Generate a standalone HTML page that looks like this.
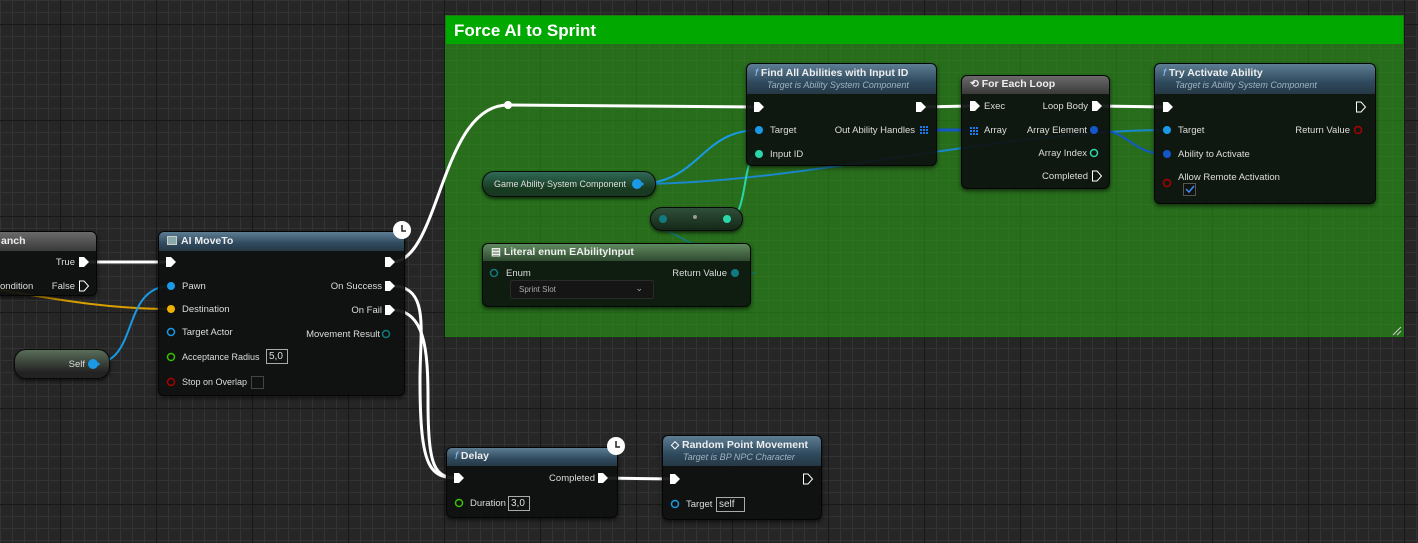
<!DOCTYPE html>
<html><head><meta charset="utf-8"><style>
*{margin:0;padding:0;box-sizing:border-box}
body{width:1418px;height:543px;overflow:hidden;position:relative;font-family:"Liberation Sans",sans-serif;font-size:10px;color:#ddd;
background-color:#262626;
background-image:
linear-gradient(90deg,#181818 1px,transparent 1px),
linear-gradient(0deg,#181818 1px,transparent 1px),
linear-gradient(90deg,#333 1px,transparent 1px),
linear-gradient(0deg,#333 1px,transparent 1px);
background-size:96px 96px,96px 96px,12px 12px,12px 12px;
background-position:60px 0,0 25px,0 0,0 1px;}
.abs{position:absolute}
.comment{position:absolute;left:445px;top:15px;width:959px;height:322px;background:rgba(40,160,20,0.58);border:1px solid #1f7a14}
.comment .h{height:28px;background:#00a800;color:#fff;font-size:17px;font-weight:bold;padding:5px 8px}
.node{position:absolute;background:rgba(14,17,15,0.93);border:1px solid #050505;border-radius:6px;box-shadow:0 2px 4px rgba(0,0,0,.6)}
.hd{border-radius:5px 5px 0 0;background:linear-gradient(180deg,#5d7d93,#2f4a5e 60%,#263845);color:#eee;font-size:10.5px;font-weight:bold;padding:3px 8px;height:19px;white-space:nowrap}
.hd.tall{height:30px}
.hd .sub{font-weight:normal;font-style:italic;color:#9fb3c0;font-size:9px;padding-left:12px;margin-top:1px}
.hd.gray{background:linear-gradient(180deg,#6a6a6a,#3a3a3a)}
.hd.greenh{background:linear-gradient(180deg,#5f8a5f,#304a30)}
.t{position:absolute;font-size:9.5px;color:#ddd;white-space:nowrap}
.r{text-align:right}
.box{position:absolute;border:1px solid #aaa;font-size:10px;color:#ddd;padding:0 2px;height:15px;line-height:13px}
.pill{position:absolute;border-radius:12px;background:linear-gradient(180deg,#3e5a3e,#1b2b1b);border:1px solid #0a0a0a;box-shadow:0 2px 3px rgba(0,0,0,.6)}
.clock{position:absolute;width:18px;height:18px;border-radius:50%;background:#fff}
.fn{font-style:italic;color:#8fc4ff;font-weight:normal;margin-right:3px}
</style></head><body>
<div class="comment"><div class="h">Force AI to Sprint</div></div>
<svg class="abs" style="left:1392px;top:326px" width="10" height="10"><path d="M1 9L9 1M5 9L9 5" stroke="#ccc" stroke-width="1"/></svg>

<svg class="abs" style="left:0;top:0" width="1418" height="543" fill="none">
<path d="M0 290 C60 300,110 309,171 309" stroke="#d9a000" stroke-width="2"/>
<path d="M93 364 C140 364,120 286,171 286" stroke="#1a9ae6" stroke-width="2"/>
<path d="M83 262 L171 262" stroke="#fff" stroke-width="3"/>
<path d="M392 262 C440 262,440 105,508 105 L759 107" stroke="#fff" stroke-width="3"/>
<circle cx="508" cy="105" r="4" fill="#fff"/>
<path d="M392 286 C430 286,420 330,420 380 C420 470,430 478,459 478" stroke="#fff" stroke-width="3"/>
<path d="M392 310 C425 310,428 350,428 400 C428 470,435 478,459 478" stroke="#fff" stroke-width="3"/>
<path d="M602 478 L675 479" stroke="#fff" stroke-width="3"/>
<path d="M921 107 L970 106" stroke="#fff" stroke-width="3"/>
<path d="M1097 106 L1167 107" stroke="#fff" stroke-width="3"/>
<path d="M637 184 C700 184,700 130,759 130" stroke="#1a9ae6" stroke-width="2"/>
<path d="M637 184 C800 184,1000 130,1167 130" stroke="#1a88cc" stroke-width="2"/>
<path d="M923 130 L970 130" stroke="#1457c8" stroke-width="3"/>
<path d="M1097 130 C1130 130,1130 154,1167 154" stroke="#1457c8" stroke-width="2"/>
<path d="M727 219 C750 219,740 154,759 154" stroke="#2bd6a8" stroke-width="2"/>
<path d="M663 219 C640 225,700 240,735 273 L755 273" stroke="#117a80" stroke-width="1.5"/>
</svg>

<div class="node" style="left:-10px;top:231px;width:107px;height:65px">
<div class="hd gray" style="padding-left:10px">anch</div></div>
<div class="t r" style="left:20px;top:257px;width:55px">True</div>
<div class="t r" style="left:20px;top:281px;width:55px">False</div>
<div class="t" style="left:0;top:281px">ondition</div>
<svg class="abs" style="left:78px;top:256px" width="12" height="36"><path d="M1 1h5l5 5-5 5H1z" fill="#fff"/><path d="M1.5 25h4.5l4.5 5-4.5 5H1.5z" stroke="#fff" fill="none"/></svg>

<div class="pill" style="left:14px;top:349px;width:96px;height:30px;background:linear-gradient(180deg,#5a6e5a,#222 80%)"></div>
<div class="t r" style="left:30px;top:359px;width:55px">Self</div>
<svg class="abs" style="left:87px;top:358px" width="14" height="12"><circle cx="6" cy="6" r="5" fill="#1a9ae6"/><path d="M11 4l2 2-2 2z" fill="#1a9ae6"/></svg>

<div class="node" style="left:158px;top:231px;width:247px;height:165px">
<div class="hd"><span style="display:inline-block;width:10px;height:9px;border:1px solid #ccc;background:#8aa;margin-right:4px;vertical-align:-1px"></span>AI MoveTo</div></div>
<div class="clock" style="left:393px;top:221px"></div>
<svg class="abs" style="left:393px;top:221px" width="18" height="18"><path d="M9 4v6h4" stroke="#222" stroke-width="1.5" fill="none"/></svg>
<svg class="abs" style="left:0;top:0" width="420" height="400">
<path d="M166 257h5l5 5-5 5h-5z" fill="#fff"/>
<path d="M385 257h5l5 5-5 5h-5z" fill="#fff"/>
<path d="M385 281h5l5 5-5 5h-5z" fill="#fff"/>
<path d="M385 305h5l5 5-5 5h-5z" fill="#fff"/>
<circle cx="171" cy="286" r="4" fill="#1a9ae6"/>
<circle cx="171" cy="309" r="4" fill="#f0b000"/>
<circle cx="171" cy="332" r="3.5" stroke="#1a9ae6" stroke-width="1.5" fill="none"/>
<circle cx="171" cy="357" r="3.5" stroke="#3ac000" stroke-width="1.5" fill="none"/>
<circle cx="171" cy="382" r="3.5" stroke="#a00" stroke-width="1.5" fill="none"/>
<circle cx="386" cy="334" r="3.5" stroke="#117a80" stroke-width="1.5" fill="none"/>
</svg>
<div class="t" style="left:182px;top:281px">Pawn</div>
<div class="t" style="left:182px;top:304px">Destination</div>
<div class="t" style="left:182px;top:327px">Target Actor</div>
<div class="t" style="left:182px;top:352px;font-size:9px">Acceptance Radius</div>
<div class="box" style="left:266px;top:349px;width:22px">5,0</div>
<div class="t" style="left:182px;top:377px;font-size:9px">Stop on Overlap</div>
<div class="box" style="left:251px;top:376px;width:13px;height:13px;border-color:#444"></div>
<div class="t r" style="left:300px;top:281px;width:82px">On Success</div>
<div class="t r" style="left:300px;top:305px;width:82px">On Fail</div>
<div class="t r" style="left:280px;top:329px;width:100px">Movement Result</div>

<div class="pill" style="left:482px;top:171px;width:174px;height:26px;background:linear-gradient(180deg,#2f6a58,#183a20 70%)"></div>
<div class="t" style="left:494px;top:179px;font-size:9px">Game Ability System Component</div>
<svg class="abs" style="left:631px;top:178px" width="14" height="12"><circle cx="6" cy="6" r="5" fill="#1a9ae6"/><path d="M11 4l2 2-2 2z" fill="#1a9ae6"/></svg>

<div class="pill" style="left:650px;top:207px;width:93px;height:24px;background:linear-gradient(180deg,#2f4f3a,#152818)"></div>
<svg class="abs" style="left:650px;top:207px" width="95" height="26"><circle cx="13" cy="12" r="4" fill="#117a80"/><circle cx="45" cy="10" r="2" fill="#999"/><circle cx="77" cy="12" r="4" fill="#2bd6a8"/></svg>

<div class="node" style="left:482px;top:243px;width:269px;height:64px;background:rgba(14,22,15,0.93)">
<div class="hd greenh" style="height:17px;padding-top:2px">&#9636; Literal enum EAbilityInput</div></div>
<div class="t" style="left:506px;top:268px">Enum</div>
<div class="t r" style="left:640px;top:268px;width:87px">Return Value</div>
<div class="abs" style="left:510px;top:280px;width:144px;height:19px;background:#151515;border:1px solid #2a2a2a;border-radius:2px;font-size:8px;color:#aaa;padding:4px 0 0 8px">Sprint Slot<span style="position:absolute;right:10px;top:2px;font-size:9px">&#8964;</span></div>
<svg class="abs" style="left:488px;top:266px" width="260" height="14"><circle cx="6" cy="7" r="3.5" stroke="#117a80" stroke-width="1.5" fill="none"/><circle cx="247" cy="7" r="4" fill="#117a80"/></svg>

<div class="node" style="left:746px;top:63px;width:191px;height:103px">
<div class="hd tall"><span class="fn">f</span>Find All Abilities with Input ID<div class="sub">Target is Ability System Component</div></div></div>
<div class="t" style="left:770px;top:125px">Target</div>
<div class="t" style="left:770px;top:149px">Input ID</div>
<div class="t r" style="left:820px;top:125px;width:95px">Out Ability Handles</div>
<svg class="abs" style="left:740px;top:95px" width="200" height="70">
<path d="M14 7h5l5 5-5 5h-5z" fill="#fff"/><path d="M176 7h5l5 5-5 5h-5z" fill="#fff"/>
<circle cx="19" cy="35" r="4" fill="#1a9ae6"/><circle cx="19" cy="59" r="4" fill="#2bd6a8"/>
<g fill="#1a7af0"><rect x="180" y="31" width="2" height="2"/><rect x="183" y="31" width="2" height="2"/><rect x="186" y="31" width="2" height="2"/><rect x="180" y="34" width="2" height="2"/><rect x="183" y="34" width="2" height="2"/><rect x="186" y="34" width="2" height="2"/><rect x="180" y="37" width="2" height="2"/><rect x="183" y="37" width="2" height="2"/><rect x="186" y="37" width="2" height="2"/></g>
</svg>

<div class="node" style="left:961px;top:75px;width:149px;height:114px">
<div class="hd gray" style="height:18px;padding-top:2px">&#10226; For Each Loop</div></div>
<div class="t" style="left:984px;top:101px">Exec</div>
<div class="t" style="left:984px;top:125px">Array</div>
<div class="t r" style="left:1000px;top:101px;width:88px">Loop Body</div>
<div class="t r" style="left:1000px;top:125px;width:87px">Array Element</div>
<div class="t r" style="left:1000px;top:148px;width:87px">Array Index</div>
<div class="t r" style="left:1000px;top:171px;width:88px">Completed</div>
<svg class="abs" style="left:960px;top:95px" width="150" height="90">
<path d="M10 6h5l5 5-5 5h-5z" fill="#fff"/><path d="M132 6h5l5 5-5 5h-5z" fill="#fff"/>
<path d="M132.5 76h4.5l4.5 5-4.5 5h-4.5z" stroke="#fff" fill="none"/>
<g fill="#1a7af0"><rect x="10" y="32" width="2" height="2"/><rect x="13" y="32" width="2" height="2"/><rect x="16" y="32" width="2" height="2"/><rect x="10" y="35" width="2" height="2"/><rect x="13" y="35" width="2" height="2"/><rect x="16" y="35" width="2" height="2"/><rect x="10" y="38" width="2" height="2"/><rect x="13" y="38" width="2" height="2"/><rect x="16" y="38" width="2" height="2"/></g>
<circle cx="134" cy="35" r="4" fill="#1457c8"/>
<circle cx="134" cy="58" r="3.5" stroke="#2bd6a8" stroke-width="1.5" fill="none"/>
</svg>

<div class="node" style="left:1154px;top:63px;width:222px;height:141px">
<div class="hd tall"><span class="fn">f</span>Try Activate Ability<div class="sub">Target is Ability System Component</div></div></div>
<div class="t" style="left:1178px;top:125px">Target</div>
<div class="t" style="left:1178px;top:149px">Ability to Activate</div>
<div class="t" style="left:1178px;top:172px">Allow Remote Activation</div>
<div class="t r" style="left:1270px;top:125px;width:80px">Return Value</div>
<svg class="abs" style="left:1154px;top:95px" width="222" height="105">
<path d="M9 7h5l5 5-5 5h-5z" fill="#fff"/><path d="M202.5 7h4.5l4.5 5-4.5 5h-4.5z" stroke="#fff" fill="none"/>
<circle cx="13" cy="35" r="4" fill="#1a9ae6"/><circle cx="13" cy="59" r="4" fill="#1457c8"/>
<circle cx="13" cy="88" r="3.5" stroke="#a00" stroke-width="1.5" fill="none"/>
<circle cx="204" cy="35" r="3.5" stroke="#a00" stroke-width="1.5" fill="none"/>
<rect x="29.5" y="88.5" width="12" height="12" fill="#111" stroke="#555"/>
<path d="M32 94l3 3 5-6" stroke="#3a8cf0" stroke-width="1.5" fill="none"/>
</svg>

<div class="node" style="left:446px;top:447px;width:172px;height:71px">
<div class="hd" style="height:18px;padding-top:2px"><span class="fn">f</span>Delay</div></div>
<div class="clock" style="left:607px;top:437px"></div>
<svg class="abs" style="left:607px;top:437px" width="18" height="18"><path d="M9 4v6h4" stroke="#222" stroke-width="1.5" fill="none"/></svg>
<div class="t r" style="left:520px;top:473px;width:75px">Completed</div>
<div class="t" style="left:470px;top:498px">Duration</div>
<div class="box" style="left:508px;top:496px;width:22px">3,0</div>
<svg class="abs" style="left:450px;top:470px" width="165" height="40">
<path d="M4 3h5l5 5-5 5H4z" fill="#fff"/><path d="M148 3h5l5 5-5 5h-5z" fill="#fff"/>
<circle cx="9" cy="33" r="3.5" stroke="#3ac000" stroke-width="1.5" fill="none"/>
</svg>

<div class="node" style="left:662px;top:435px;width:160px;height:85px">
<div class="hd tall"><span style="color:#fff">&#9671;</span> Random Point Movement<div class="sub">Target is BP NPC Character</div></div></div>
<div class="t" style="left:686px;top:499px">Target</div>
<div class="box" style="left:716px;top:497px;width:29px">self</div>
<svg class="abs" style="left:665px;top:470px" width="155" height="45">
<path d="M5 4h5l5 5-5 5H5z" fill="#fff"/><path d="M138.5 4h4.5l4.5 5-4.5 5h-4.5z" stroke="#fff" fill="none"/>
<circle cx="10" cy="34" r="3.5" stroke="#1a9ae6" stroke-width="1.5" fill="none"/>
</svg>
</body></html>
